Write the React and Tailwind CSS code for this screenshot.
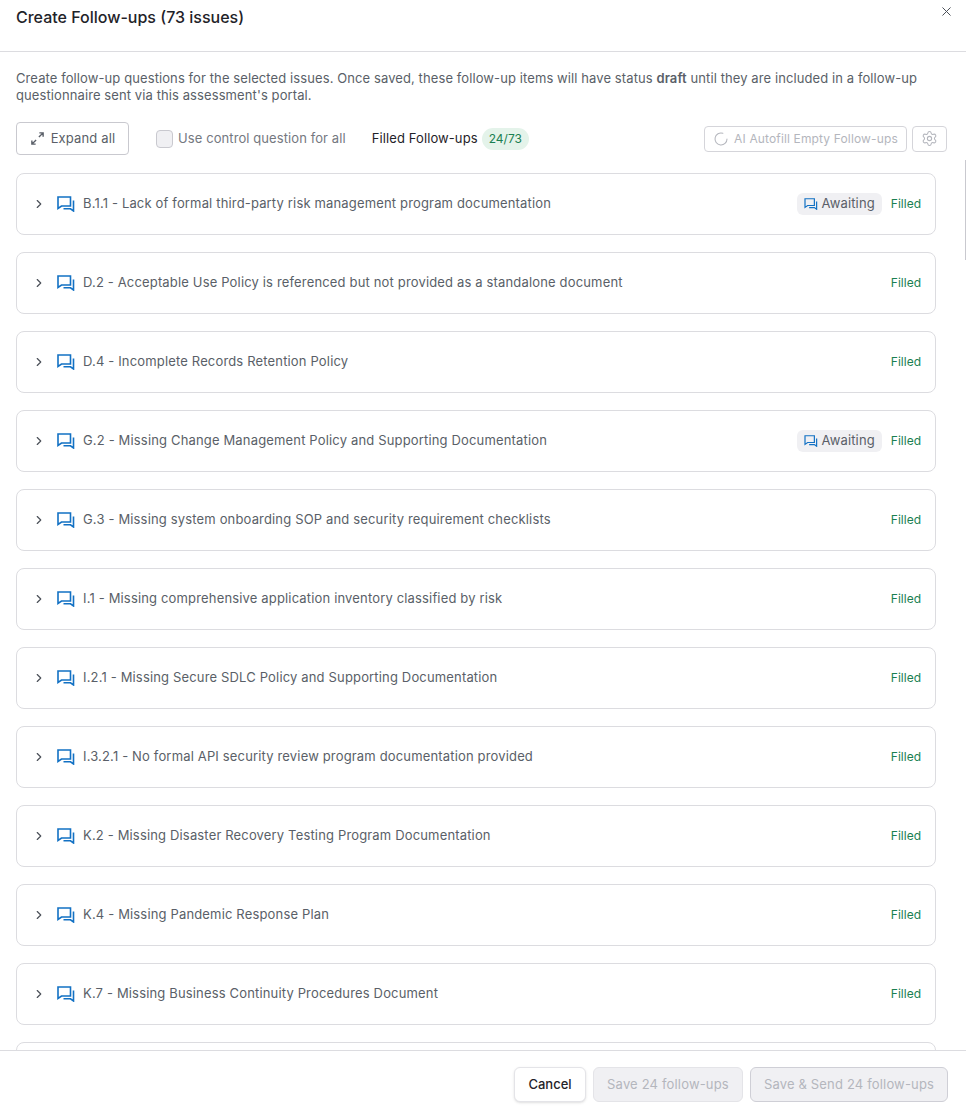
import { X, ChevronRight, Settings, LoaderCircle } from "lucide-react";

const issues = [
  { title: "B.1.1 - Lack of formal third-party risk management program documentation", awaiting: true },
  { title: "D.2 - Acceptable Use Policy is referenced but not provided as a standalone document" },
  { title: "D.4 - Incomplete Records Retention Policy" },
  { title: "G.2 - Missing Change Management Policy and Supporting Documentation", awaiting: true },
  { title: "G.3 - Missing system onboarding SOP and security requirement checklists" },
  { title: "I.1 - Missing comprehensive application inventory classified by risk" },
  { title: "I.2.1 - Missing Secure SDLC Policy and Supporting Documentation" },
  { title: "I.3.2.1 - No formal API security review program documentation provided" },
  { title: "K.2 - Missing Disaster Recovery Testing Program Documentation" },
  { title: "K.4 - Missing Pandemic Response Plan" },
  { title: "K.7 - Missing Business Continuity Procedures Document" },
];

// two overlapping speech bubbles
function ChatIcon({ className }) {
  return (
    <svg viewBox="0 0 18 16" fill="none" stroke="currentColor" strokeWidth="1.6" className={className}>
      <path d="M1 1h12.5v9H4.5L1 12.5z" strokeLinejoin="miter" />
      <path d="M16.5 4.5V15l-3-2.2H6.5" strokeLinejoin="miter" />
    </svg>
  );
}

function ExpandIcon() {
  return (
    <svg viewBox="0 0 16 16" fill="none" stroke="currentColor" strokeWidth="1.5" className="w-[15px] h-[15px]">
      <path d="M9.5 6.5 14 2M10 2h4v4M6.5 9.5 2 14M2 10v4h4" />
    </svg>
  );
}

function IssueRow({ issue }) {
  return (
    <div className="shrink-0 h-[61.5px] border border-[#dcdce0] rounded-lg flex items-center pl-[15px] pr-[14px] bg-white">
      <ChevronRight className="w-[14px] h-[14px] text-[#4b5058] mr-[11px]" strokeWidth={2} />
      <ChatIcon className="w-[18px] h-[16px] text-[#1271c4] mr-[8px]" />
      <span className="text-[13px] text-[#5a5f68] tracking-[0.16px]">{issue.title}</span>
      <div className="ml-auto flex items-center">
        {issue.awaiting && (
          <span className="flex items-center h-[22px] pl-[7px] pr-[7px] mr-[9px] rounded-md bg-[#f0f0f3] text-[13px] tracking-[0.15px] text-[#5a5f68]">
            <ChatIcon className="w-[14px] h-[12px] text-[#1271c4] mr-[3px]" />
            Awaiting
          </span>
        )}
        <span className="text-[12px] text-[#1a7f52]">Filled</span>
      </div>
    </div>
  );
}

export default function App() {
  return (
    <div className="relative h-[1113px] flex flex-col bg-white overflow-hidden font-['Inter',sans-serif]">
      {/* Header */}
      <div className="h-[52px] shrink-0 border-b border-[#dcdce0] pl-[16px] pt-[7px] relative">
        <h1 className="text-[16px] leading-[21px] font-medium text-[#1f2329]">Create Follow-ups (73 issues)</h1>
        <button className="absolute right-[12px] top-[4px] text-[#4b5058]">
          <X className="w-[15px] h-[15px]" strokeWidth={1.6} />
        </button>
      </div>

      {/* Intro text */}
      <p className="mx-[16px] mt-[18px] text-[13px] leading-[17px] text-[#5a5f68] tracking-[0.095px]">
        Create follow-up questions for the selected issues. Once saved, these follow-up items will have status{" "}
        <strong className="font-semibold">draft</strong> until they are included in a follow-up questionnaire sent via
        this assessment's portal.
      </p>

      {/* Toolbar */}
      <div className="flex items-center mt-[18px] ml-[16px] mr-[19px] h-[33px] shrink-0">
        <button className="flex items-center h-[33px] w-[113px] justify-center gap-[6px] border border-[#c9c9cf] rounded text-[13px] tracking-[0.15px] text-[#5a5f68]">
          <ExpandIcon />
          Expand all
        </button>
        <span className="ml-[27px] w-[17px] h-[18px] rounded border border-[#c9c9cf] bg-[#f0f0f3]" />
        <span className="ml-[5px] text-[13px] tracking-[0.09px] text-[#74787f]">Use control question for all</span>
        <span className="ml-[26px] text-[13px] tracking-[0.1px] text-[#1f2329]">Filled Follow-ups</span>
        <span className="ml-[4px] h-[22px] px-[7px] flex items-center rounded-full bg-[#e4f3ea] text-[12px] text-[#1a7f52]">24/73</span>
        <button className="ml-auto flex items-center h-[26px] w-[203px] justify-center gap-[5px] border border-[#d5d5da] rounded text-[12px] tracking-[0.14px] text-[#b4b6bd]">
          <LoaderCircle className="w-[16px] h-[16px]" strokeWidth={1.6} />
          AI Autofill Empty Follow-ups
        </button>
        <button className="ml-[5px] flex items-center justify-center h-[26px] w-[35px] border border-[#d5d5da] rounded text-[#b4b6bd]">
          <Settings className="w-[17px] h-[17px]" strokeWidth={1.5} />
        </button>
      </div>

      {/* Issue list, cut off by the footer */}
      <div className="flex-1 min-h-0 overflow-hidden mt-[18px] mx-[16px] w-[920px] flex flex-col gap-[17.5px]">
        {issues.map((issue) => (
          <IssueRow key={issue.title} issue={issue} />
        ))}
        <div className="shrink-0 h-[62px] border border-[#dcdce0] rounded-lg" />
      </div>

      {/* Footer */}
      <div className="h-[63px] shrink-0 border-t border-[#dcdce0] flex items-center justify-end gap-[7px] pr-[18px] pt-[5px] bg-white">
        <button className="h-[35px] w-[72px] rounded-md border border-[#e4e4e8] bg-white text-[13px] font-medium text-[#1f2329] shadow-sm">Cancel</button>
        <button className="h-[35px] w-[150px] rounded-md border border-[#e4e4e8] bg-[#f0f0f3] text-[13px] tracking-[0.17px] text-[#b4b6bd]">Save 24 follow-ups</button>
        <button className="h-[35px] w-[198px] rounded-md border border-[#cfcfd6] bg-[#f0f0f3] text-[13px] tracking-[0.17px] text-[#b4b6bd]">Save &amp; Send 24 follow-ups</button>
      </div>

      {/* Scrollbar sliver */}
      <div className="absolute right-0 top-[160px] w-px h-[100px] bg-[#c9c9cf]" />
    </div>
  );
}
